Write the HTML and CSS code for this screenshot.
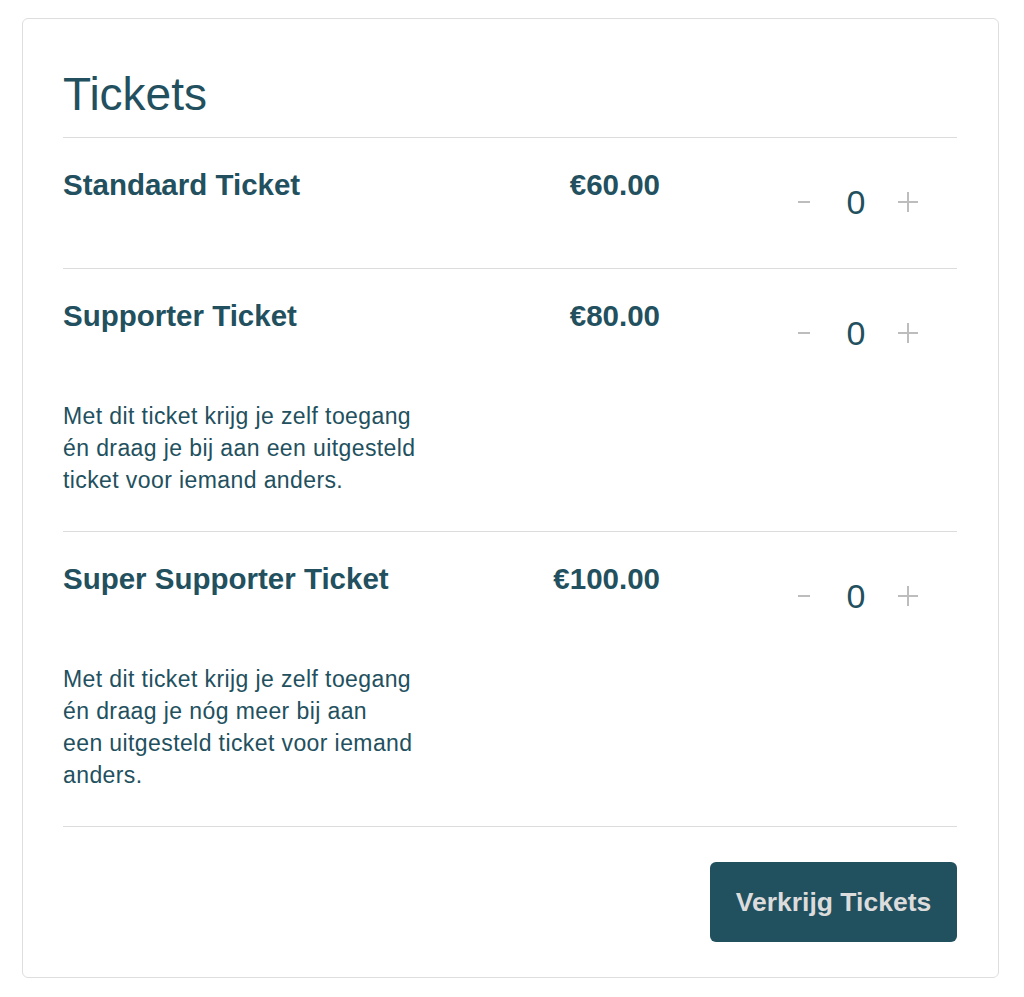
FILE: index.html
```html
<!DOCTYPE html>
<html lang="nl">
<head>
<meta charset="utf-8">
<title>Tickets</title>
<link rel="stylesheet" href="styles.css">
</head>
<body>
<section class="card">
  <h1 class="card-title">Tickets</h1>

  <div class="ticket">
    <div class="ticket-name">Standaard Ticket</div>
    <div class="ticket-price">€60.00</div>
    <div class="qty">
      <button class="qty-btn" aria-label="minder"><svg width="14" height="14" viewBox="0 0 14 14"><line x1="1" y1="7" x2="13" y2="7"/></svg></button>
      <span class="qty-value">0</span>
      <button class="qty-btn" aria-label="meer"><svg width="20" height="20" viewBox="0 0 20 20"><line x1="0" y1="10" x2="20" y2="10"/><line x1="10" y1="0" x2="10" y2="20"/></svg></button>
    </div>
  </div>

  <div class="ticket">
    <div class="ticket-name">Supporter Ticket</div>
    <div class="ticket-price">€80.00</div>
    <div class="qty">
      <button class="qty-btn" aria-label="minder"><svg width="14" height="14" viewBox="0 0 14 14"><line x1="1" y1="7" x2="13" y2="7"/></svg></button>
      <span class="qty-value">0</span>
      <button class="qty-btn" aria-label="meer"><svg width="20" height="20" viewBox="0 0 20 20"><line x1="0" y1="10" x2="20" y2="10"/><line x1="10" y1="0" x2="10" y2="20"/></svg></button>
    </div>
    <p class="ticket-desc">Met dit ticket krijg je zelf toegang én draag je bij aan een uitgesteld ticket voor iemand anders.</p>
  </div>

  <div class="ticket">
    <div class="ticket-name">Super Supporter Ticket</div>
    <div class="ticket-price">€100.00</div>
    <div class="qty">
      <button class="qty-btn" aria-label="minder"><svg width="14" height="14" viewBox="0 0 14 14"><line x1="1" y1="7" x2="13" y2="7"/></svg></button>
      <span class="qty-value">0</span>
      <button class="qty-btn" aria-label="meer"><svg width="20" height="20" viewBox="0 0 20 20"><line x1="0" y1="10" x2="20" y2="10"/><line x1="10" y1="0" x2="10" y2="20"/></svg></button>
    </div>
    <p class="ticket-desc">Met dit ticket krijg je zelf toegang én draag je nóg meer bij aan<br>een uitgesteld ticket voor iemand anders.</p>
  </div>

  <div class="card-footer">
    <button class="buy-btn">Verkrijg Tickets</button>
  </div>
</section>
</body>
</html>
```

FILE: styles.css
```css
* {
  box-sizing: border-box;
}

html, body {
  margin: 0;
  background: #ffffff;
}

body {
  padding: 18px 0 0 22px;
  font-family: "Liberation Sans", Arial, Helvetica, sans-serif;
  color: #22505e;
}

.card {
  width: 977px;
  border: 1px solid #dedede;
  border-radius: 6px;
  padding: 52px 41px 35px 40px;
  background: #fff;
}

.card-title {
  margin: 0 0 20px;
  font-size: 46px;
  line-height: 46px;
  font-weight: 400;
  color: #22505e;
}

.ticket {
  display: grid;
  grid-template-columns: 1fr auto 297px;
  align-items: start;
  border-top: 1px solid #dcdcdc;
  padding: 30px 0 35px;
}

.ticket-name,
.ticket-price {
  font-size: 29.5px;
  line-height: 34px;
  font-weight: 700;
}

.ticket-price {
  text-align: right;
}

.qty {
  display: flex;
  justify-content: flex-end;
  align-items: center;
  height: 63px;
  margin-top: 2px;
  padding-right: 23px;
}

.qty-btn {
  width: 52px;
  height: 40px;
  padding: 0;
  border: 0;
  background: none;
  display: flex;
  align-items: center;
  justify-content: center;
  cursor: pointer;
}

.qty-btn svg {
  stroke: #bdbdbd;
  stroke-width: 2;
}

.qty-value {
  width: 52px;
  text-align: center;
  font-size: 34px;
  line-height: 40px;
  color: #22505e;
}

.ticket-desc {
  grid-column: 1;
  margin: 36px 0 0;
  max-width: 360px;
  font-size: 23px;
  line-height: 32px;
  letter-spacing: 0.4px;
}

.card-footer {
  display: flex;
  justify-content: flex-end;
  border-top: 1px solid #dcdcdc;
  padding-top: 35px;
}

.buy-btn {
  height: 80px;
  width: 247px;
  border: 0;
  border-radius: 6px;
  background: #21505e;
  color: #dcdcdc;
  font-family: "Liberation Sans", Arial, Helvetica, sans-serif;
  font-size: 26.5px;
  font-weight: 700;
  cursor: pointer;
}
```
